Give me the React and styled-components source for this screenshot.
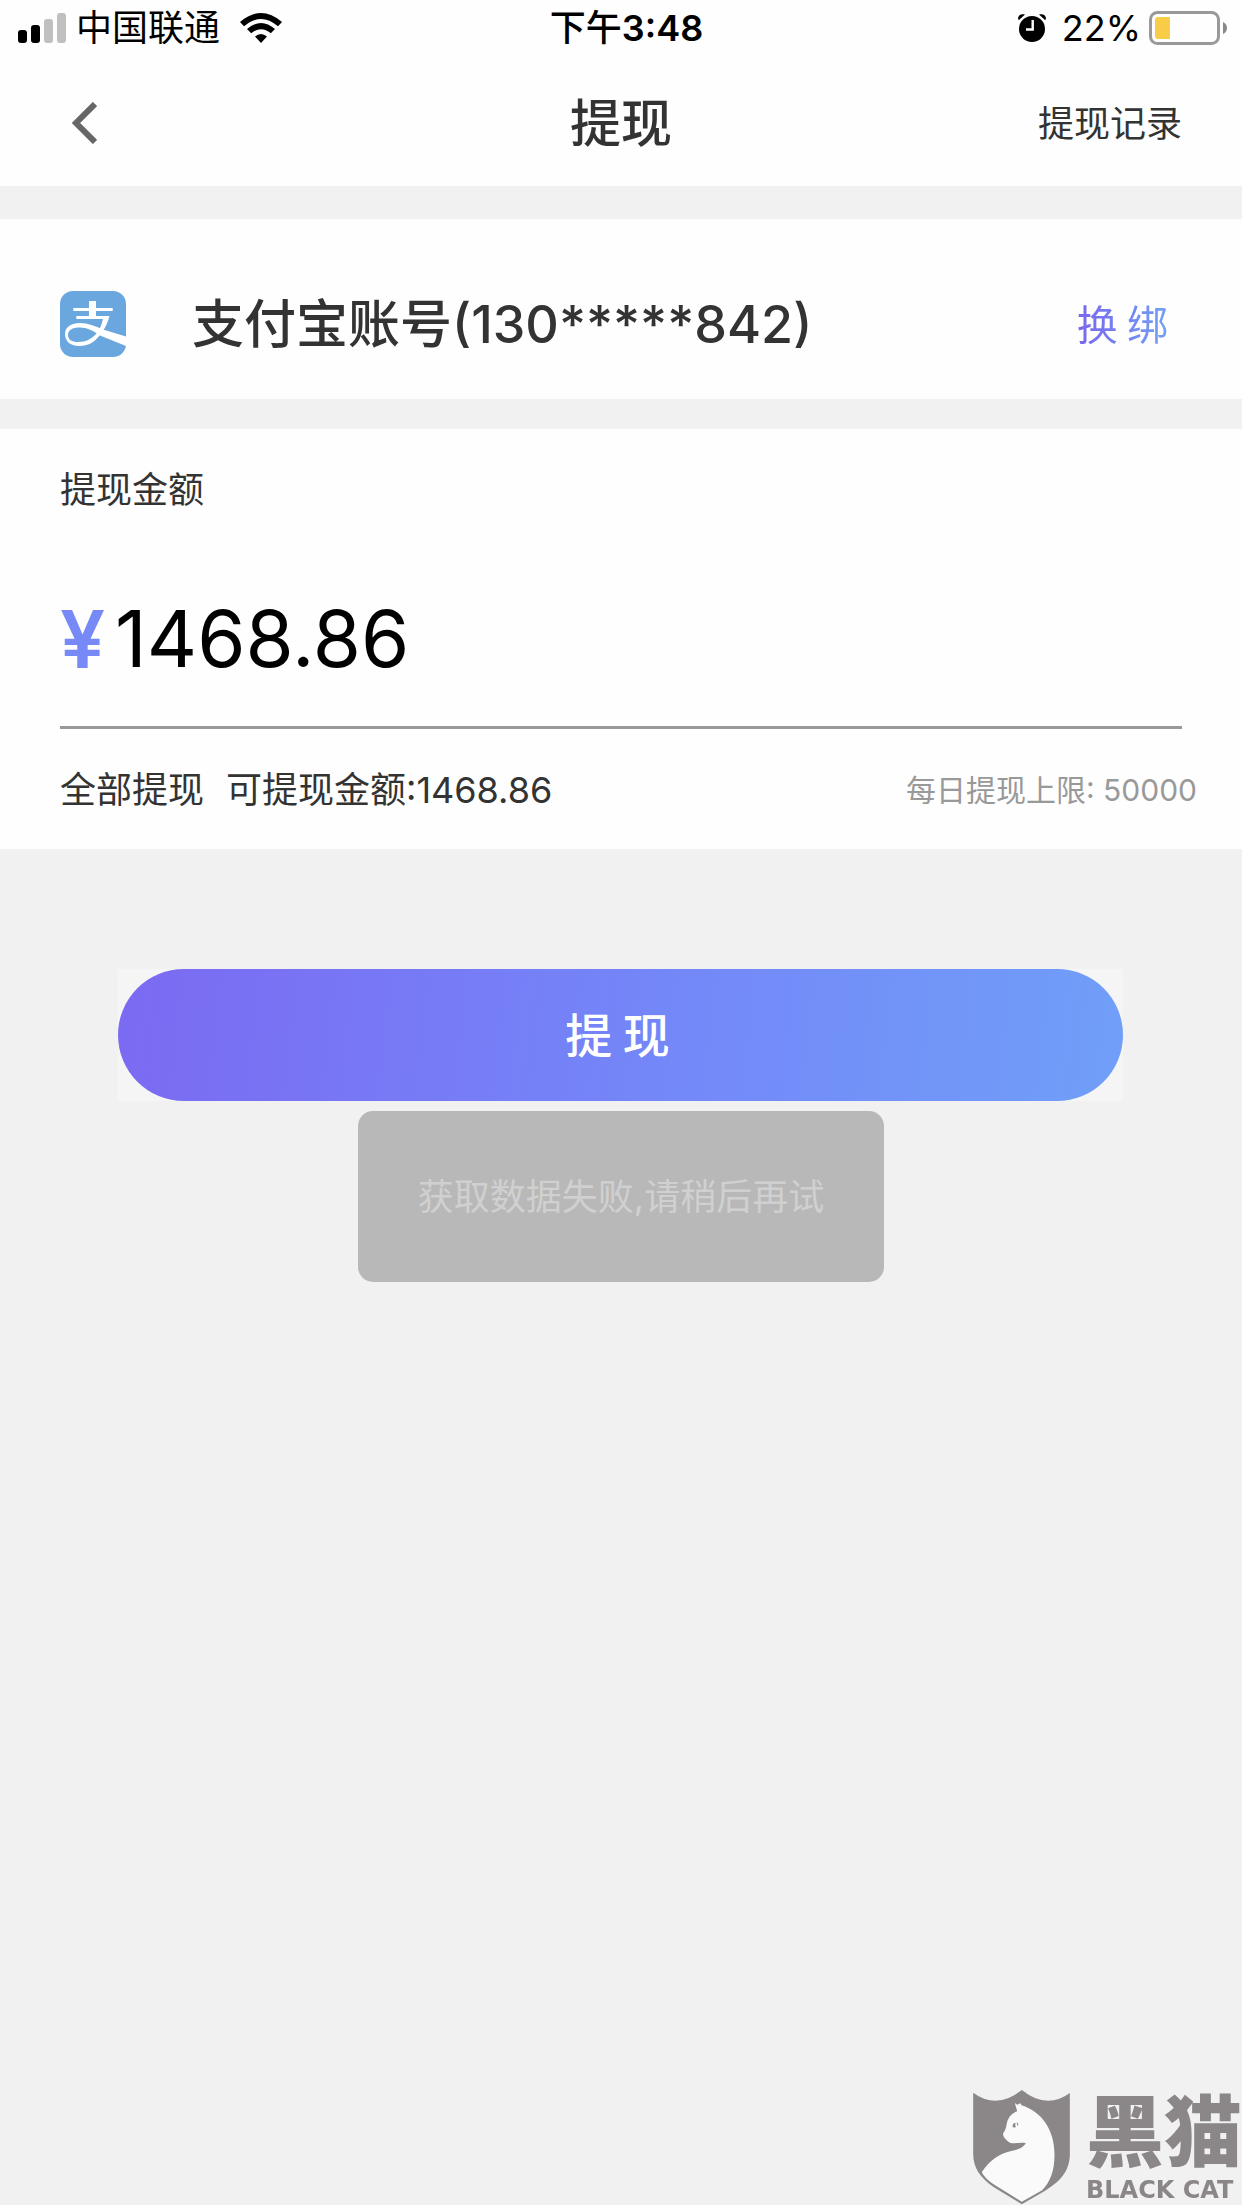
import React from "react"
import styled, { createGlobalStyle, ThemeProvider } from "styled-components"

const theme = {
  page: "#f1f1f1",
  surface: "#fefefe",
  text: "#333333",
  muted: "#999999",
  accent: "#7788f7",
  watermark: "#8b8788",
  gradient: "linear-gradient(97deg, #7b6af2 0%, #7486f8 52%, #709ff8 100%)",
}

const GlobalStyle = createGlobalStyle`
  *,
  *::before,
  *::after {
    box-sizing: border-box;
  }

  body {
    margin: 0;
    background-color: #f1f1f1;
    font-family: Inter, "Noto Sans CJK SC", sans-serif;
  }

  button,
  input {
    border: 0;
    border-radius: 0;
    font-family: inherit;
    margin: 0;
    padding: 0;
  }
`

const Page = styled.div`
  background-color: ${props => props.theme.page};
  color: ${props => props.theme.text};
  font-size: 36px;
  line-height: 52px;
  min-height: 100vh;
`

const Header = styled.header`
  background-color: ${props => props.theme.surface};
`

const StatusBar = styled.div`
  align-items: center;
  color: #000;
  display: grid;
  grid-template-columns: 1fr auto 1fr;
  height: 56px;
  padding: 0 15px 0 18px;
`

const StatusGroup = styled.div`
  align-items: center;
  display: flex;
  justify-content: ${props => (props.$end ? "flex-end" : "flex-start")};
`

const Carrier = styled.span`
  margin: 0 20px 0 10px;
`

const Time = styled.span`
  font-weight: 600;
  padding-left: 8px;

  span {
    font-weight: 500;
  }
`

const Percent = styled.span`
  margin: 0 8px 0 16px;
`

const NavBar = styled.nav`
  align-items: center;
  display: grid;
  grid-template-columns: 1fr auto 1fr;
  height: 130px;
  padding: 4px 60px 0;
`

const BackButton = styled.button`
  align-items: center;
  background: none;
  display: flex;
  height: 60px;
  justify-self: start;
  padding: 0 12px;
`

const Title = styled.h1`
  font-size: 51px;
  font-weight: 500;
  line-height: 60px;
  margin: 0;
  padding-top: 2px;
`

const RecordLink = styled.a`
  color: inherit;
  justify-self: end;
  padding-top: 2px;
  text-decoration: none;
`

const Card = styled.section`
  background-color: ${props => props.theme.surface};
  padding: 0 60px;
`

const AccountCard = styled(Card)`
  align-items: center;
  display: flex;
  margin-top: 33px;
  padding-right: 74px;
  padding-top: 30px;
  height: 180px;
`

const AccountName = styled.span`
  flex: 1;
  font-size: 52px;
  font-weight: 500;
  line-height: 60px;
  margin-left: 66px;
  padding-top: 2px;
`

const RebindButton = styled.button`
  background: linear-gradient(90deg, #7867ee, #729ff5);
  background-clip: text;
  color: transparent;
  font-family: "Noto Sans CJK SC", sans-serif;
  font-size: 41px;
  line-height: 52px;
  padding-bottom: 4px;
`

const AmountCard = styled(Card)`
  margin-top: 30px;
  padding-bottom: 33px;
  padding-top: 35px;
`

const AmountLabel = styled.label`
  display: block;
`

const AmountRow = styled.div`
  align-items: center;
  border-bottom: 3px solid ${props => props.theme.muted};
  display: flex;
  height: 178px;
  margin-top: 35px;
  margin-bottom: 35px;
`

const Currency = styled.span`
  color: ${props => props.theme.accent};
  font-size: 80px;
  font-weight: 600;
  line-height: 96px;
`

const AmountInput = styled.input`
  background: none;
  color: #000;
  flex: 1;
  font-size: 78px;
  height: 96px;
  margin-left: 10px;
  min-width: 0;
  outline: none;
`

const AmountFooter = styled.div`
  align-items: center;
  display: flex;
  margin-right: -15px;
`

const AllButton = styled.button`
  background: none;
  color: inherit;
  font-size: 36px;
  line-height: 52px;
  margin-right: 22px;
`

const Limit = styled.span`
  color: ${props => props.theme.muted};
  font-size: 30px;
  margin-left: auto;
`

const SubmitWrapper = styled.div`
  background-color: #f5f5f5;
  margin: 120px 119px 0 118px;
`

const SubmitButton = styled.button`
  background: ${props => props.theme.gradient};
  border-radius: 66px;
  color: #fff;
  display: block;
  font-family: "Noto Sans CJK SC", sans-serif;
  font-size: 47px;
  font-weight: 500;
  height: 132px;
  padding: 0 6px 6px 0;
  width: 100%;
`

const Toast = styled.div`
  background-color: #b8b8b8;
  border-radius: 15px;
  color: #d0d0d0;
  margin: 10px auto 0;
  padding: 60px 60px 59px;
  width: fit-content;
`

const Watermark = styled.div`
  bottom: 0;
  color: ${props => props.theme.watermark};
  display: flex;
  position: fixed;
  right: 0;
`

const Brand = styled.div`
  display: flex;
  flex-direction: column;
  margin-left: 16px;
`

const BrandName = styled.span`
  font-size: 78px;
  font-weight: 900;
  line-height: 86px;
`

const BrandLatin = styled.span`
  font-family: "DejaVu Sans", sans-serif;
  font-size: 24px;
  font-weight: 700;
  line-height: 29px;
`

const SignalIcon = () => (
  <svg width="48" height="30" viewBox="0 0 48 30" aria-hidden="true">
    <rect x="0" y="17" width="9" height="13" rx="3" />
    <rect x="13" y="12" width="9" height="18" rx="3" />
    <rect x="26" y="6" width="9" height="24" rx="3" fill="#c0c0c0" />
    <rect x="39" y="0" width="9" height="30" rx="3" fill="#c0c0c0" />
  </svg>
)

const WifiIcon = () => (
  <svg width="42" height="30" viewBox="0 0 42 30" aria-hidden="true">
    <path d="M0 9Q21-9 42 9L38 13.3Q21-1.5 4 13.3Z" />
    <path d="M7 16Q21 4 35 16L30.8 20.3Q21 12 11.2 20.3Z" />
    <path d="M15 23.5Q21 18.5 27 23.5L21 30Z" />
  </svg>
)

const AlarmIcon = () => (
  <svg width="28" height="28" viewBox="0 0 28 28" aria-hidden="true">
    <circle cx="14" cy="15" r="13" />
    <path d="M0 5C0 1 3-.5 7 .6L1 6Z" />
    <path d="M28 5C28 1 25-.5 21 .6L27 6Z" />
    <path d="M14.7 6V15.5H8" fill="none" stroke="#fff" strokeWidth="2.4" />
  </svg>
)

const BatteryIcon = () => (
  <svg width="78" height="34" viewBox="0 0 78 34" aria-hidden="true">
    <rect
      x="1.5"
      y="1.5"
      width="68"
      height="31"
      rx="7"
      fill="none"
      stroke="#999"
      strokeWidth="3"
    />
    <path d="M6 9Q6 6 9 6H21V28H9Q6 28 6 25Z" fill="#f8cc46" />
    <path d="M74 11Q78 13 78 17T74 23Z" fill="#888" />
  </svg>
)

const BackIcon = () => (
  <svg width="25" height="42" viewBox="0 0 25 42" aria-hidden="true">
    <path d="M23 2L4 21L23 40" fill="none" stroke="#666" strokeWidth="6" />
  </svg>
)

const AlipayIcon = () => (
  <svg width="66" height="66" viewBox="0 0 66 66" role="img" aria-label="支付宝">
    <rect width="66" height="66" rx="13" fill="#6aa7df" />
    <path
      d="M29 10H36V17H52.7V20H36V25H49.5C48 31 45.5 36 43 40C36 50 30 55 19 55C10 55 5 50 5 43C5 36 11 32 20 32C28 32 35 35 43 38.5L66 45.5V55L40 44.5C33 39.5 27 36.5 20 36.5C12 36.5 8 39 8 44C8 48.5 12 51 18 51C28 51 34 46 38 40.5C40.5 36.5 42 32.5 43 28H16.3V25H29V20H13.3V17H29Z"
      fill="#fff"
    />
  </svg>
)

const CatShield = () => (
  <svg width="97" height="115" viewBox="94 75 290 345" aria-hidden="true">
    <path
      d="M94 83Q165 135 240 75Q315 135 384 84V268C384 320 352 352 310 377L240 418L155 366C115 338 94 310 94 265Z"
      fill="#8b8788"
    />
    <path
      d="M219 114L226 119L236 115L239 121C300 140 338 195 338 268C338 320 325 350 301 376L240 410L160 361C138 346 124 332 120 321C145 285 170 268 205 259C235 253 245 246 252 235C237 231 222 237 206 234C192 227 182 214 184 205C192 195 193 185 195 175C199 157 210 145 226 139Z"
      fill="#fafafa"
    />
    <path d="M212 184Q213 173 221 173Q219 179 222 186Q214 190 212 184Z" fill="#8b8788" />
    <path d="M224 172Q233 176 227 184Q226 177 224 172Z" fill="#8b8788" />
  </svg>
)

function App() {
  const [amount, setAmount] = React.useState("1468.86")

  return (
    <ThemeProvider theme={theme}>
      <GlobalStyle />
      <Page>
        <Header>
          <StatusBar>
            <StatusGroup>
              <SignalIcon />
              <Carrier>中国联通</Carrier>
              <WifiIcon />
            </StatusGroup>
            <Time>
              <span>下午</span>3:48
            </Time>
            <StatusGroup $end>
              <AlarmIcon />
              <Percent>22%</Percent>
              <BatteryIcon />
            </StatusGroup>
          </StatusBar>
          <NavBar>
            <BackButton type="button" aria-label="返回">
              <BackIcon />
            </BackButton>
            <Title>提现</Title>
            <RecordLink href="#records">提现记录</RecordLink>
          </NavBar>
        </Header>
        <main>
          <AccountCard>
            <AlipayIcon />
            <AccountName>支付宝账号(130*****842)</AccountName>
            <RebindButton type="button">换 绑</RebindButton>
          </AccountCard>
          <AmountCard>
            <AmountLabel htmlFor="amount">提现金额</AmountLabel>
            <AmountRow>
              <Currency>¥</Currency>
              <AmountInput
                id="amount"
                inputMode="decimal"
                value={amount}
                onChange={e => setAmount(e.target.value)}
              />
            </AmountRow>
            <AmountFooter>
              <AllButton type="button">全部提现</AllButton>
              <span>可提现金额:1468.86</span>
              <Limit>每日提现上限: 50000</Limit>
            </AmountFooter>
          </AmountCard>
          <SubmitWrapper>
            <SubmitButton type="button">提 现</SubmitButton>
          </SubmitWrapper>
          <Toast role="status">获取数据失败,请稍后再试</Toast>
        </main>
        <Watermark>
          <CatShield />
          <Brand>
            <BrandName>黑猫</BrandName>
            <BrandLatin>BLACK CAT</BrandLatin>
          </Brand>
        </Watermark>
      </Page>
    </ThemeProvider>
  )
}

export default App
